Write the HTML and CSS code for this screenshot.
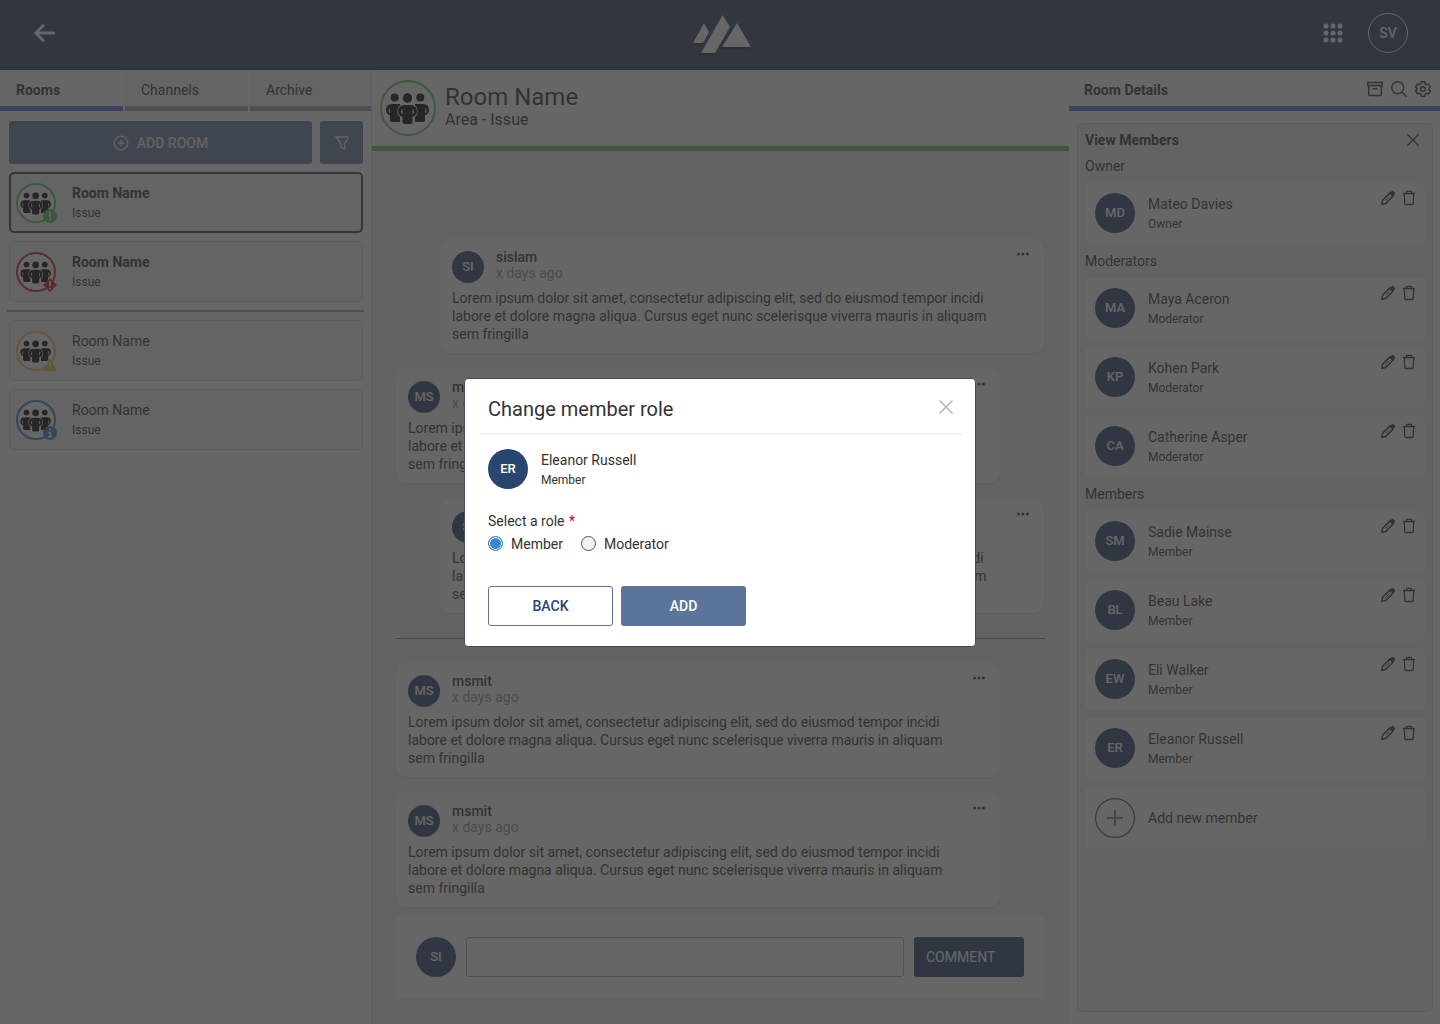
FILE: index.html
```html
<!DOCTYPE html>
<html lang="en">
<head>
    <meta charset="UTF-8">
    <meta name="viewport" content="width=device-width, initial-scale=1.0">
    <title>Rooms - Change member role</title>
    <link rel="stylesheet" href="styles.css">
</head>
<body>
    <!-- Shared icons -->
    <svg class="sprite" aria-hidden="true">
        <symbol id="people" viewBox="0 0 56 56">
            <g>
                <circle cx="14.700" cy="17.500" r="4"/>
                <circle cx="40.300" cy="17.500" r="4"/>
                <path fill-rule="evenodd" d="M12 24h8v18h-8q-2 0-2-2v-4.500q-4-2-4-5.500q0-6 6-6zM10 28q-1.300 1-1.300 2.700t1.300 2.800z"/>
                <path fill-rule="evenodd" d="M35 24h8q6 0 6 6q0 3.500-4 5.500v4.500q0 2-2 2h-8zM45.300 28v5.500q1.300-1 1.300-2.800t-1.300-2.700z"/>
            </g>
            <path d="M24.500 25h6q6 .500 6 6.500q0 4-4 5.500v5q0 2-2 2h-6q-2 0-2-2v-5q-4-1.500-4-5.500q0-6 6-6.500z" fill="none" stroke="#fff" stroke-width="2.400"/>
            <circle cx="27.500" cy="18" r="4.700"/>
            <path fill-rule="evenodd" d="M24.500 25h6q6.500 .500 6.500 6.500q0 4-4.500 5.500v5q0 2-2 2h-6q-2 0-2-2v-5q-4.500-1.500-4.500-5.500q0-6 6.500-6.500zM22.500 28.500q-1.400 1-1.400 3t1.400 3zM32.500 28.500v6q1.400-1 1.400-3t-1.400-3z"/>
        </symbol>
        <symbol id="dots" viewBox="0 0 12 4">
            <circle cx="1.600" cy="2" r="1.500"/><circle cx="6" cy="2" r="1.500"/><circle cx="10.400" cy="2" r="1.500"/>
        </symbol>
        <symbol id="pencil" viewBox="0 0 16 16">
            <path d="M1.700 14.300l.900-4 7.700-7.700 3.100 3.100-7.700 7.700z" fill="none" stroke="currentColor" stroke-width="1.500" stroke-linejoin="round"/>
            <path d="M9.300 3.500l2.100-2.100q1.200-1.200 2.400 0l.8.800q1.200 1.200 0 2.400l-2.100 2.100z" fill="currentColor"/>
            <path d="M5.500 10.500l4-4" stroke="currentColor" stroke-width=".800"/>
        </symbol>
        <symbol id="trash" viewBox="0 0 16 16">
            <path d="M2 3.500h12M5.500 3.500V2q0-.700.700-.700h3.600q.700 0 .700.700v1.500M3.300 3.500l.500 10q0 1 1 1h6.400q1 0 1-1l.500-10" fill="none" stroke="currentColor" stroke-width="1.300"/>
        </symbol>
        <symbol id="cross" viewBox="0 0 16 16">
            <path d="M2 2l12 12M14 2L2 14" fill="none" stroke="currentColor" stroke-width="1.600" stroke-linecap="round"/>
        </symbol>
    </svg>

    <div class="app">
        <header class="topbar">
            <button class="icon-btn" aria-label="Back">
                <svg width="24" height="20" viewBox="0 0 24 20" fill="none" stroke="#fff" stroke-width="2.800"><path d="M23 10H4M12 1.800L3.800 10l8.200 8.200"/></svg>
            </button>
            <svg class="logo" width="64" height="44" viewBox="0 0 64 44">
                <path d="M4 33.500L15 13.500l5 9-6 11zM12 43.500L33.500 5.500l7.500 12-15 26zM33 37.500l15-24 14 24z" fill="#1c1c1c"/>
                <path d="M5 32L16 12l5 9-6 11zM13 42L34.500 4l7.500 12-15 26zM34 36l15-24 14 24z" fill="#fff"/>
            </svg>
            <div class="topbar-right">
                <button class="icon-btn" aria-label="Apps">
                    <svg width="20" height="20" viewBox="0 0 20 20" fill="#fff">
                        <circle cx="3" cy="3" r="2.500"/><circle cx="10" cy="3" r="2.500"/><circle cx="17" cy="3" r="2.500"/>
                        <circle cx="3" cy="10" r="2.500"/><circle cx="10" cy="10" r="2.500"/><circle cx="17" cy="10" r="2.500"/>
                        <circle cx="3" cy="17" r="2.500"/><circle cx="10" cy="17" r="2.500"/><circle cx="17" cy="17" r="2.500"/>
                    </svg>
                </button>
                <button class="avatar avatar-outline">SV</button>
            </div>
        </header>

        <div class="columns">
            <!-- Room list -->
            <aside class="rooms">
                <nav class="tabs">
                    <a class="tab active" href="#">Rooms</a>
                    <a class="tab" href="#">Channels</a>
                    <a class="tab" href="#">Archive</a>
                </nav>
                <div class="room-tools">
                    <button class="btn-add-room">
                        <svg width="16" height="16" viewBox="0 0 16 16" fill="none" stroke="currentColor" stroke-width="1.300"><circle cx="8" cy="8" r="6.800"/><path d="M8 5v6M5 8h6"/></svg>
                        ADD ROOM
                    </button>
                    <button class="btn-filter" aria-label="Filter">
                        <svg width="16" height="16" viewBox="0 0 16 16" fill="none" stroke="currentColor" stroke-width="1.300"><path d="M13.500 4.500V2H2l5 6.500V12l3.500 2V8.500L13 5"/></svg>
                    </button>
                </div>
                <div class="room-list">
                    <a class="room selected" href="#">
                        <span class="room-icon green">
                            <svg class="people"><use href="#people"/></svg>
                            <svg class="badge" viewBox="0 0 14 14"><circle cx="7" cy="7" r="7" fill="currentColor"/><path d="M7 3v5M7 9.500v2" stroke="#fff" stroke-width="1.700"/></svg>
                        </span>
                        <span class="room-text"><strong>Room Name</strong><small>Issue</small></span>
                    </a>
                    <a class="room" href="#">
                        <span class="room-icon red">
                            <svg class="people"><use href="#people"/></svg>
                            <svg class="badge" viewBox="0 0 14 14"><path d="M7 0l7 7-7 7-7-7z" fill="currentColor"/><path d="M7 3v5M7 9.500v2" stroke="#fff" stroke-width="1.700"/></svg>
                        </span>
                        <span class="room-text"><strong>Room Name</strong><small>Issue</small></span>
                    </a>
                    <hr class="room-divider">
                    <a class="room" href="#">
                        <span class="room-icon yellow">
                            <svg class="people"><use href="#people"/></svg>
                            <svg class="badge" viewBox="0 0 14 14"><path d="M7 1.500L14 14H0z" fill="currentColor"/><path d="M7 5v4.500M7 10.700v1.600" stroke="#fff" stroke-width="1.500"/></svg>
                        </span>
                        <span class="room-text"><span>Room Name</span><small>Issue</small></span>
                    </a>
                    <a class="room" href="#">
                        <span class="room-icon blue">
                            <svg class="people"><use href="#people"/></svg>
                            <svg class="badge" viewBox="0 0 14 14"><circle cx="7" cy="7" r="7" fill="currentColor"/><path d="M7 3v2M5.300 6.500H7.200v4M5 10.700h4" fill="none" stroke="#fff" stroke-width="1.500"/></svg>
                        </span>
                        <span class="room-text"><span>Room Name</span><small>Issue</small></span>
                    </a>
                </div>
            </aside>

            <!-- Conversation -->
            <main class="chat">
                <div class="chat-header">
                    <span class="room-icon large green"><svg class="people"><use href="#people"/></svg></span>
                    <div>
                        <h1>Room Name</h1>
                        <p>Area - Issue</p>
                    </div>
                </div>
                <div class="chat-body">
                    <article class="message own">
                        <div class="message-head">
                            <span class="avatar small">SI</span>
                            <div><strong>sislam</strong><time>x days ago</time></div>
                            <button class="icon-btn more" aria-label="More"><svg width="12" height="4"><use href="#dots"/></svg></button>
                        </div>
                        <p>Lorem ipsum dolor sit amet, consectetur adipiscing elit, sed do eiusmod tempor incidi labore et dolore magna aliqua. Cursus eget nunc scelerisque viverra mauris in aliquam sem fringilla</p>
                    </article>
                    <article class="message">
                        <div class="message-head">
                            <span class="avatar small">MS</span>
                            <div><strong>msmit</strong><time>x days ago</time></div>
                            <button class="icon-btn more" aria-label="More"><svg width="12" height="4"><use href="#dots"/></svg></button>
                        </div>
                        <p>Lorem ipsum dolor sit amet, consectetur adipiscing elit, sed do eiusmod tempor incidi labore et dolore magna aliqua. Cursus eget nunc scelerisque viverra mauris in aliquam sem fringilla</p>
                    </article>
                    <article class="message own">
                        <div class="message-head">
                            <span class="avatar small">SI</span>
                            <div><strong>sislam</strong><time>x days ago</time></div>
                            <button class="icon-btn more" aria-label="More"><svg width="12" height="4"><use href="#dots"/></svg></button>
                        </div>
                        <p>Lorem ipsum dolor sit amet, consectetur adipiscing elit, sed do eiusmod tempor incidi labore et dolore magna aliqua. Cursus eget nunc scelerisque viverra mauris in aliquam sem fringilla</p>
                    </article>
                    <hr class="chat-divider">
                    <article class="message">
                        <div class="message-head">
                            <span class="avatar small">MS</span>
                            <div><strong>msmit</strong><time>x days ago</time></div>
                            <button class="icon-btn more" aria-label="More"><svg width="12" height="4"><use href="#dots"/></svg></button>
                        </div>
                        <p>Lorem ipsum dolor sit amet, consectetur adipiscing elit, sed do eiusmod tempor incidi labore et dolore magna aliqua. Cursus eget nunc scelerisque viverra mauris in aliquam sem fringilla</p>
                    </article>
                    <article class="message">
                        <div class="message-head">
                            <span class="avatar small">MS</span>
                            <div><strong>msmit</strong><time>x days ago</time></div>
                            <button class="icon-btn more" aria-label="More"><svg width="12" height="4"><use href="#dots"/></svg></button>
                        </div>
                        <p>Lorem ipsum dolor sit amet, consectetur adipiscing elit, sed do eiusmod tempor incidi labore et dolore magna aliqua. Cursus eget nunc scelerisque viverra mauris in aliquam sem fringilla</p>
                    </article>
                    <form class="comment-box">
                        <span class="avatar">SI</span>
                        <input type="text" aria-label="Comment">
                        <button type="button">COMMENT</button>
                    </form>
                </div>
            </main>

            <!-- Room details -->
            <aside class="details">
                <div class="details-header">
                    <h2>Room Details</h2>
                    <button class="icon-btn" aria-label="Archive">
                        <svg width="16" height="16" viewBox="0 0 16 16" fill="none" stroke="currentColor" stroke-width="1.500"><path d="M.800 1.500h14.400v3H.800zM1.700 4.500v9q0 1 1 1h10.600q1 0 1-1v-9M5.500 7.700h5"/></svg>
                    </button>
                    <button class="icon-btn" aria-label="Search">
                        <svg width="16" height="16" viewBox="0 0 16 16" fill="none" stroke="currentColor" stroke-width="1.400"><circle cx="6.700" cy="6.700" r="6"/><path d="M11 11l4.600 4.600"/></svg>
                    </button>
                    <button class="icon-btn" aria-label="Settings">
                        <svg width="16" height="16" viewBox="0 0 16 16" fill="none" stroke="currentColor" stroke-width="1.500" stroke-linejoin="round"><circle cx="8" cy="8" r="2.300"/><path d="M6.300.800h3.400l.500 2 1.500.900 2-.600 1.700 2.900-1.500 1.500v1l1.500 1.500-1.700 2.900-2-.600-1.500.900-.500 2H6.300l-.500-2-1.500-.900-2 .600L.600 10l1.500-1.500v-1L.600 6l1.700-2.900 2 .600 1.500-.900z"/></svg>
                    </button>
                </div>
                <section class="panel">
                    <div class="panel-title">
                        <h2>View Members</h2>
                        <button class="icon-btn" aria-label="Close"><svg width="14" height="14"><use href="#cross"/></svg></button>
                    </div>
                    <h3>Owner</h3>
                    <div class="member">
                        <span class="avatar">MD</span>
                        <div class="member-text"><span>Mateo Davies</span><small>Owner</small></div>
                        <div class="member-actions">
                            <button class="icon-btn" aria-label="Edit"><svg width="16" height="16"><use href="#pencil"/></svg></button>
                            <button class="icon-btn" aria-label="Delete"><svg width="16" height="16"><use href="#trash"/></svg></button>
                        </div>
                    </div>
                    <h3>Moderators</h3>
                    <div class="member">
                        <span class="avatar">MA</span>
                        <div class="member-text"><span>Maya Aceron</span><small>Moderator</small></div>
                        <div class="member-actions">
                            <button class="icon-btn" aria-label="Edit"><svg width="16" height="16"><use href="#pencil"/></svg></button>
                            <button class="icon-btn" aria-label="Delete"><svg width="16" height="16"><use href="#trash"/></svg></button>
                        </div>
                    </div>
                    <div class="member">
                        <span class="avatar">KP</span>
                        <div class="member-text"><span>Kohen Park</span><small>Moderator</small></div>
                        <div class="member-actions">
                            <button class="icon-btn" aria-label="Edit"><svg width="16" height="16"><use href="#pencil"/></svg></button>
                            <button class="icon-btn" aria-label="Delete"><svg width="16" height="16"><use href="#trash"/></svg></button>
                        </div>
                    </div>
                    <div class="member">
                        <span class="avatar">CA</span>
                        <div class="member-text"><span>Catherine Asper</span><small>Moderator</small></div>
                        <div class="member-actions">
                            <button class="icon-btn" aria-label="Edit"><svg width="16" height="16"><use href="#pencil"/></svg></button>
                            <button class="icon-btn" aria-label="Delete"><svg width="16" height="16"><use href="#trash"/></svg></button>
                        </div>
                    </div>
                    <h3>Members</h3>
                    <div class="member">
                        <span class="avatar">SM</span>
                        <div class="member-text"><span>Sadie Mainse</span><small>Member</small></div>
                        <div class="member-actions">
                            <button class="icon-btn" aria-label="Edit"><svg width="16" height="16"><use href="#pencil"/></svg></button>
                            <button class="icon-btn" aria-label="Delete"><svg width="16" height="16"><use href="#trash"/></svg></button>
                        </div>
                    </div>
                    <div class="member">
                        <span class="avatar">BL</span>
                        <div class="member-text"><span>Beau Lake</span><small>Member</small></div>
                        <div class="member-actions">
                            <button class="icon-btn" aria-label="Edit"><svg width="16" height="16"><use href="#pencil"/></svg></button>
                            <button class="icon-btn" aria-label="Delete"><svg width="16" height="16"><use href="#trash"/></svg></button>
                        </div>
                    </div>
                    <div class="member">
                        <span class="avatar">EW</span>
                        <div class="member-text"><span>Eli Walker</span><small>Member</small></div>
                        <div class="member-actions">
                            <button class="icon-btn" aria-label="Edit"><svg width="16" height="16"><use href="#pencil"/></svg></button>
                            <button class="icon-btn" aria-label="Delete"><svg width="16" height="16"><use href="#trash"/></svg></button>
                        </div>
                    </div>
                    <div class="member">
                        <span class="avatar">ER</span>
                        <div class="member-text"><span>Eleanor Russell</span><small>Member</small></div>
                        <div class="member-actions">
                            <button class="icon-btn" aria-label="Edit"><svg width="16" height="16"><use href="#pencil"/></svg></button>
                            <button class="icon-btn" aria-label="Delete"><svg width="16" height="16"><use href="#trash"/></svg></button>
                        </div>
                    </div>
                    <button class="member add-member">
                        <svg width="40" height="40" viewBox="0 0 40 40" fill="none" stroke="#555"><circle cx="20" cy="20" r="19.400" stroke-width="1.200"/><path d="M20 12v16M12 20h16" stroke-width="1.500"/></svg>
                        <span>Add new member</span>
                    </button>
                </section>
            </aside>
        </div>
    </div>

    <!-- Change role dialog -->
    <div class="overlay">
        <div class="modal" role="dialog" aria-labelledby="modalTitle">
            <div class="modal-head">
                <h2 id="modalTitle">Change member role</h2>
                <button class="icon-btn modal-close" aria-label="Close"><svg width="16" height="16"><use href="#cross"/></svg></button>
            </div>
            <form class="modal-body">
                <div class="modal-member">
                    <span class="avatar">ER</span>
                    <div class="member-text"><span>Eleanor Russell</span><small>Member</small></div>
                </div>
                <fieldset class="roles">
                    <legend>Select a role <span class="required">*</span></legend>
                    <div class="role-options">
                        <label><input type="radio" name="role" checked> Member</label>
                        <label><input type="radio" name="role"> Moderator</label>
                    </div>
                </fieldset>
                <div class="modal-actions">
                    <button type="button" class="btn-back">BACK</button>
                    <button type="button" class="btn-add">ADD</button>
                </div>
            </form>
        </div>
    </div>
</body>
</html>
```
FILE: styles.css
```css
* {
    margin: 0;
    padding: 0;
    box-sizing: border-box;
}

body {
    font-family: Roboto, "Liberation Sans", sans-serif;
    font-size: 14px;
    line-height: 18px;
    color: #333;
    background: #fff;
}

a {
    color: inherit;
    text-decoration: none;
}

button,
input {
    font: inherit;
    color: inherit;
}

button {
    border: none;
    background: none;
    cursor: pointer;
}

small {
    font-size: 12px;
}

strong {
    font-weight: 700;
}

svg {
    display: block;
}

.sprite {
    display: none;
}

.icon-btn {
    display: flex;
}

.app {
    display: flex;
    flex-direction: column;
    min-height: 100vh;
}

/* Top bar */
.topbar {
    display: grid;
    grid-template-columns: 1fr auto 1fr;
    align-items: center;
    height: 70px;
    padding: 0 32px 4px;
    background: #304064;
    color: #fff;
}

.topbar-right {
    display: flex;
    justify-content: flex-end;
    align-items: center;
    gap: 25px;
}

.avatar {
    display: flex;
    justify-content: center;
    align-items: center;
    flex: none;
    width: 40px;
    height: 40px;
    border-radius: 50%;
    background: #294670;
    color: #fff;
    font-size: 13px;
    font-weight: 500;
}

.avatar.small {
    width: 32px;
    height: 32px;
}

.avatar-outline {
    background: none;
    border: 1px solid #fff;
    font-size: 14px;
}

.columns {
    display: flex;
    flex: 1;
}

/* Room list */
.rooms {
    width: 372px;
    flex: none;
    border-right: 1px solid #e0e0e0;
}

.tabs {
    display: flex;
    gap: 2px;
}

.tab {
    flex: 0 0 123px;
    height: 41px;
    padding: 11px 16px 0;
    background: #f5f5f5;
    border-bottom: 5px solid #94a8b4;
}

.tab:last-child {
    flex: 1;
}

.tab.active {
    font-weight: 700;
    background: #fff;
    border-color: #606cec;
}

.room-tools {
    display: flex;
    gap: 8px;
    padding: 10px 8px 8px 9px;
}

.btn-add-room,
.btn-filter {
    display: flex;
    justify-content: center;
    align-items: center;
    gap: 8px;
    height: 43px;
    border-radius: 3px;
    background: #6480a4;
    color: #f0f0f0;
    font-weight: 500;
}

.btn-add-room {
    flex: 1;
}

.btn-filter {
    width: 43px;
}

.room-list {
    display: flex;
    flex-direction: column;
    gap: 8px;
    padding: 0 8px 8px 9px;
}

.room {
    display: flex;
    gap: 16px;
    height: 61px;
    padding: 10px 6px;
    border: 1px solid #dcdcdc;
    border-radius: 5px;
    background: #f7f7f7;
}

.room.selected {
    padding: 9px 5px;
    border: 2px solid #304050;
}

.room-icon {
    position: relative;
    width: 40px;
    height: 40px;
    border: 2px solid currentColor;
    border-radius: 50%;
    background: #fff;
}

.room-icon.large {
    width: 56px;
    height: 56px;
}

.room-icon .people {
    width: 40px;
    height: 40px;
    margin: -2px;
    fill: #000;
}

.room-icon.large .people {
    width: 56px;
    height: 56px;
}

.badge {
    position: absolute;
    right: -3px;
    bottom: -2px;
    width: 14px;
    height: 14px;
}

.green { color: #5cc858; }
.red { color: #d02020; }
.yellow { color: #f4c04c; }
.blue { color: #3c80cc; }

.room-text,
.member-text {
    display: flex;
    flex-direction: column;
    gap: 2px;
    padding-top: 2px;
}

.room-text {
    padding-top: 1px;
}

.room-divider {
    height: 2px;
    margin: 0 -1px 0 -2px;
    border: none;
    background: #aaa;
}

/* Conversation */
.chat {
    display: flex;
    flex-direction: column;
    flex: 1;
    min-width: 0;
    background: #f4f4f4;
}

.chat-header {
    display: flex;
    gap: 9px;
    height: 81px;
    padding: 10px 8px 0;
    background: #fff;
    border-bottom: 5px solid #5cc858;
}

.chat-header h1 {
    margin-top: 3px;
    font-size: 24px;
    font-weight: 400;
    line-height: 28px;
}

.chat-header p {
    font-size: 16px;
}

.chat-body {
    display: flex;
    flex-direction: column;
    gap: 16px;
    padding: 88px 25px 24px 24px;
}

.message {
    margin-right: 44px;
    padding: 10px 12px;
    border-radius: 10px;
    background: #fff;
    box-shadow: 0 1px 3px rgba(0, 0, 0, 0.1);
}

.message.own {
    margin: 0 0 0 44px;
}

.message-head {
    display: flex;
    gap: 12px;
    line-height: 16px;
    margin-bottom: 6px;
}

.message-head .avatar {
    margin-top: 2px;
}

.message-head strong {
    font-weight: 500;
}

.message-head time {
    display: block;
    color: #949494;
}

.message p {
    padding-right: 36px;
}

.more {
    margin: 3px 3px 0 auto;
    height: 4px;
    fill: #333;
}

.chat-divider {
    height: 1px;
    margin: 9px -1px 8px 0;
    border: none;
    background: #888;
}

.comment-box {
    display: flex;
    gap: 10px;
    margin-top: -8px;
    padding: 21px 19px;
    border: 1px solid #f8f8f8;
    background: #fff;
}

.comment-box input {
    flex: 1;
    min-width: 0;
    height: 40px;
    padding: 0 12px;
    border: 1px solid #a0acb8;
    border-radius: 3px;
    background: #fff;
}

.comment-box button {
    width: 110px;
    padding: 0 12px;
    border-radius: 3px;
    background: #294670;
    color: #fff;
    text-align: left;
}

/* Room details */
.details {
    display: flex;
    flex-direction: column;
    width: 371px;
    flex: none;
}

.details-header {
    display: flex;
    gap: 8px;
    height: 41px;
    padding: 11px 9px 0 15px;
    border-bottom: 5px solid #606cec;
}

.details h2 {
    flex: 1;
    font-size: 14px;
    font-weight: 700;
}

.panel {
    display: flex;
    flex-direction: column;
    flex: 1;
    gap: 8px;
    margin: 12px 7px 12px 8px;
    padding: 7px;
    border: 1px solid #dcdcdc;
    border-radius: 5px;
    background: #f4f4f4;
}

.panel-title {
    display: flex;
    align-items: center;
    padding-right: 5px;
}

.panel h3 {
    font-size: 14px;
    font-weight: 400;
}

.member {
    display: flex;
    gap: 13px;
    height: 61px;
    padding: 10px;
    border-radius: 5px;
    background: #fff;
}

.member-actions {
    display: flex;
    gap: 5px;
    margin: -3px -2px 0 auto;
}

.add-member {
    align-items: center;
}

/* Dialog */
.overlay {
    position: fixed;
    inset: 0;
    display: flex;
    justify-content: center;
    align-items: center;
    background: rgba(51, 51, 51, 0.75);
}

.modal {
    width: 512px;
    max-width: 100%;
    padding: 16px 13px 20px 15px;
    border: 1px solid #384c68;
    border-radius: 4px;
    background: #fff;
}

.modal-head {
    display: flex;
    justify-content: space-between;
    padding: 2px 8px 12px;
    border-bottom: 2px solid #f1f1f1;
}

.modal-head h2 {
    font-size: 20px;
    font-weight: 400;
    line-height: 24px;
}

.modal-close {
    align-self: flex-start;
    padding-top: 2px;
    color: #b0b8bf;
}

.modal-body {
    padding: 14px 8px 0;
}

.modal-member {
    display: flex;
    gap: 13px;
}

.roles {
    margin-top: 23px;
    border: none;
}

.required {
    margin-left: 1px;
    color: #c00;
}

.role-options {
    display: flex;
    gap: 18px;
    margin-top: 5px;
}

.role-options label {
    display: flex;
    align-items: center;
    gap: 8px;
}

.role-options input {
    appearance: none;
    width: 15px;
    height: 15px;
    border: 1px solid #555;
    border-radius: 50%;
    background: #f2f2f2;
}

.role-options input:checked {
    border-color: #3c86cc;
    background: #3c86cc;
    box-shadow: inset 0 0 0 1px #fff;
}

.modal-actions {
    display: flex;
    gap: 8px;
    margin-top: 33px;
}

.modal-actions button {
    width: 125px;
    height: 40px;
    border-radius: 3px;
    font-weight: 500;
}

.btn-back {
    border: 1px solid #5a7599;
    color: #294670;
}

.btn-add {
    background: #5a7599;
    color: #fff;
}
```
